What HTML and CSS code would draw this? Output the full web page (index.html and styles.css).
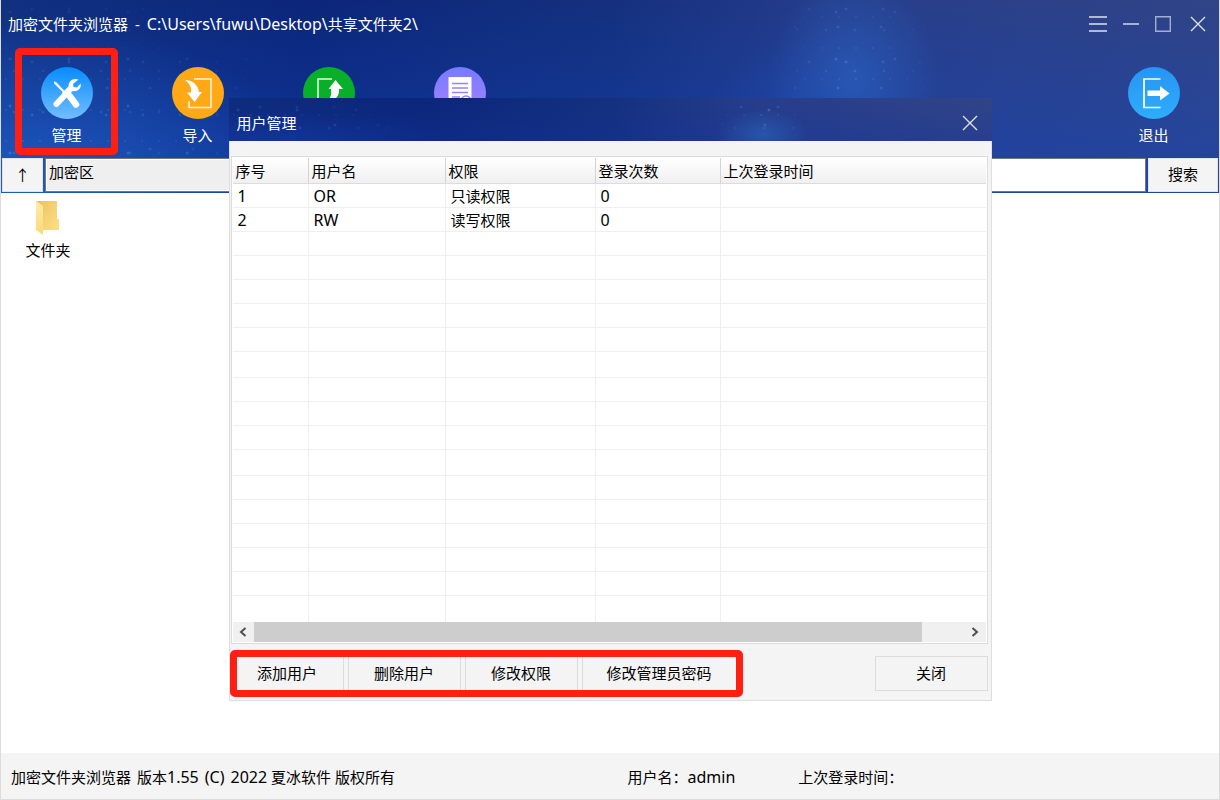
FILE: index.html
```html
<!DOCTYPE html>
<html lang="zh-CN">
<head>
<meta charset="utf-8">
<title>加密文件夹浏览器</title>
<link rel="stylesheet" href="styles.css">
</head>
<body>
<div class="app">
  <header class="banner night">
    <div class="titlebar">
      <h1 class="title"><span>加密文件夹浏览器</span><span>-</span><span><span class="latin">C:\Users\fuwu\Desktop\</span>共享文件夹<span class="latin">2\</span></span></h1>
      <div class="window-controls">
        <button class="win-btn" aria-label="菜单"><svg width="18" height="20" viewBox="0 0 18 20"><path d="M0 3h18M0 10h18M0 17h18"/></svg></button>
        <button class="win-btn" aria-label="最小化"><svg width="16" height="20" viewBox="0 0 16 20"><path d="M0 10h16"/></svg></button>
        <button class="win-btn" aria-label="最大化"><svg class="dim" width="16" height="20" viewBox="0 0 16 20"><path d="M.7 2.7h14.6v14.6H.7z"/></svg></button>
        <button class="win-btn win-close" aria-label="关闭窗口"><svg width="16" height="20" viewBox="0 0 16 20"><path d="M1 3l14 14M15 3L1 17"/></svg></button>
      </div>
    </div>
    <nav class="tools">
      <button class="tool tool-marked">
        <svg width="52" height="52" viewBox="0 0 52 52">
          <defs><linearGradient id="g1" x2="0" y2="1"><stop stop-color="#058cff"/><stop offset="1" stop-color="#73bdff"/></linearGradient></defs>
          <circle cx="26" cy="26" r="26" fill="url(#g1)"/>
          <path d="M13 14.500 L15 15 25 25.500 23.500 26.800 13 16.500Z" fill="#fff"/>
          <path d="M27.500 27.500 L35 37.500" stroke="#fff" stroke-width="6.500" stroke-linecap="round"/>
          <path d="M23.500 28.500 L15.500 37" stroke="#fff" stroke-width="6" stroke-linecap="round"/>
          <path d="M22 27 L30 19" stroke="#fff" stroke-width="3"/>
          <path d="M37.500 12.500 C32.500 10.500 26.500 14 27.800 20 L26 23.500 29 26 32 24 C37 25 41 20.500 39.500 16.500 L36 20.500 32.500 20 32 17Z" fill="#fff"/>
        </svg><span>管理</span>
      </button>
      <button class="tool">
        <svg width="52" height="52" viewBox="0 0 52 52">
          <circle cx="26" cy="26" r="26" fill="#ffa916"/>
          <path d="M22 12h17v28.500H17V34" fill="none" stroke="#fff3dc" stroke-width="1.600"/>
          <path d="M13 13 C21 13 26 18 27 25H30L22.500 35 15 25.500H19 C20 20 17 16 13 13Z" fill="#fff"/>
        </svg><span>导入</span>
      </button>
      <button class="tool">
        <svg width="52" height="52" viewBox="0 0 52 52">
          <circle cx="26" cy="26" r="26" fill="#08b02a"/>
          <path d="M29 12H15v28.500H36V34" fill="none" stroke="#e6f9e9" stroke-width="1.600"/>
          <path d="M23 36 C27 32 29 28 28 22H25.500L32.500 13 40 22H36 C37 29 31 35 23 36Z" fill="#fff"/>
        </svg><span>导出</span>
      </button>
      <button class="tool">
        <svg width="52" height="52" viewBox="0 0 52 52">
          <defs><linearGradient id="g2" x2="0" y2="1"><stop stop-color="#767aff"/><stop offset="1" stop-color="#a884ff"/></linearGradient></defs>
          <circle cx="26" cy="26" r="26" fill="url(#g2)"/>
          <path d="M14.500 10h23v30h-23z" fill="#fff"/>
          <path d="M18 16.500h16M18 21h16M18 25.500h16M18 30h8" stroke="#9681ff" stroke-width="1.300"/>
          <circle cx="32" cy="34" r="5" fill="#fff" stroke="#9681ff" stroke-width="1.500"/>
        </svg><span>日志</span>
      </button>
      <button class="tool tool-exit">
        <svg width="52" height="52" viewBox="0 0 52 52">
          <defs><linearGradient id="g3" x2="0" y2="1"><stop stop-color="#2794f3"/><stop offset="1" stop-color="#2fadfb"/></linearGradient></defs>
          <circle cx="26" cy="26" r="26" fill="url(#g3)"/>
          <path d="M32.500 12H16v28.500h16.500" fill="none" stroke="#fff" stroke-width="1.700"/>
          <path d="M19.500 23.500H32V19L41.500 26.500 32 33.500V29H19.500Z" fill="#fff"/>
        </svg><span>退出</span>
      </button>
    </nav>
    <form class="pathbar">
      <button type="button" class="up" aria-label="上一级">↑</button>
      <div class="fields">
        <input class="path" type="text" aria-label="当前路径" value="加密区" readonly>
        <input class="query" type="text" aria-label="搜索内容">
      </div>
      <button type="button" class="search">搜索</button>
    </form>
  </header>
  <main class="files">
    <a class="folder" href="#">
      <svg width="26" height="36" viewBox="0 0 26 36">
        <defs><linearGradient id="f1" x2="1" y2="1"><stop stop-color="#e9c35d"/><stop offset="1" stop-color="#ffdf86"/></linearGradient>
        <linearGradient id="f2" x2="0" y2="1"><stop stop-color="#ffebaa"/><stop offset="1" stop-color="#fbd976"/></linearGradient></defs>
        <path d="M1 1h21v17l2 2v10H8z" fill="url(#f1)"/>
        <path d="M1 1l7 5v29l-7-5z" fill="url(#f2)"/>
      </svg>
      <span>文件夹</span>
    </a>
  </main>
  <footer class="status">
    <p class="copyright"><span>加密文件夹浏览器</span><span>版本<span class="latin">1.55</span></span><span class="latin">(C)</span><span><span class="latin">2022</span> 夏冰软件 版权所有</span></p>
    <p class="user">用户名：<span class="latin">admin</span></p>
    <p class="last">上次登录时间：</p>
  </footer>

  <div class="overlay">
    <section class="dialog" role="dialog" aria-labelledby="dlg">
      <header class="dialog-head night">
        <h2 id="dlg">用户管理</h2>
        <button class="win-btn" aria-label="关闭对话框"><svg width="16" height="20" viewBox="0 0 16 20"><path d="M1 3l14 14M15 3L1 17"/></svg></button>
      </header>
      <div class="dialog-body">
        <div class="list">
          <table>
            <colgroup><col class="c1"><col class="c2"><col class="c3"><col class="c4"><col></colgroup>
            <thead><tr><th>序号</th><th>用户名</th><th>权限</th><th>登录次数</th><th>上次登录时间</th></tr></thead>
            <tbody>
              <tr><td class="latin">1</td><td class="latin">OR</td><td>只读权限</td><td class="latin">0</td><td></td></tr>
              <tr><td class="latin">2</td><td class="latin">RW</td><td>读写权限</td><td class="latin">0</td><td></td></tr>
              <tr><td></td><td></td><td></td><td></td><td></td></tr>
              <tr><td></td><td></td><td></td><td></td><td></td></tr>
              <tr><td></td><td></td><td></td><td></td><td></td></tr>
              <tr><td></td><td></td><td></td><td></td><td></td></tr>
              <tr><td></td><td></td><td></td><td></td><td></td></tr>
              <tr class="tall"><td></td><td></td><td></td><td></td><td></td></tr>
              <tr><td></td><td></td><td></td><td></td><td></td></tr>
              <tr><td></td><td></td><td></td><td></td><td></td></tr>
              <tr><td></td><td></td><td></td><td></td><td></td></tr>
              <tr class="tall"><td></td><td></td><td></td><td></td><td></td></tr>
              <tr><td></td><td></td><td></td><td></td><td></td></tr>
              <tr><td></td><td></td><td></td><td></td><td></td></tr>
              <tr><td></td><td></td><td></td><td></td><td></td></tr>
              <tr><td></td><td></td><td></td><td></td><td></td></tr>
              <tr><td></td><td></td><td></td><td></td><td></td></tr>
              <tr class="tall last-row"><td></td><td></td><td></td><td></td><td></td></tr>
            </tbody>
          </table>
          <div class="scrollbar">
            <button aria-label="向左滚动"><svg width="8" height="10" viewBox="0 0 8 10"><path d="M6.500 1L2 5l4.500 4"/></svg></button>
            <div class="track"><div class="thumb"></div></div>
            <button aria-label="向右滚动"><svg width="8" height="10" viewBox="0 0 8 10"><path d="M1.500 1L6 5l-4.500 4"/></svg></button>
          </div>
        </div>
        <div class="actions">
          <div class="marked">
            <button class="action">添加用户</button>
            <button class="action">删除用户</button>
            <button class="action">修改权限</button>
            <button class="action wide">修改管理员密码</button>
          </div>
          <button class="action">关闭</button>
        </div>
      </div>
    </section>
  </div>
</div>
</body>
</html>
```
FILE: styles.css
```css
* { box-sizing: border-box; }
body, h1, h2, p { margin: 0; }
body, button, input {
  font: 15px/20px "Noto Sans", "Noto Sans CJK SC", sans-serif;
  color: #000;
}
button { border: 0; padding: 0; background: none; }
h1, h2 { font-size: 15px; font-weight: 400; }
svg { display: block; }
.latin { font-size: 16px; }

.app {
  position: relative;
  display: flex;
  flex-direction: column;
  min-height: 100vh;
  background: #fff;
  border: 1px solid #dcdcdc;
  border-top: 0;
}

/* Night-sky banner shared by the window and the dialog */
.night {
  position: relative;
  isolation: isolate;
  color: #fff;
  background:
    radial-gradient(ellipse 7% 55% at 70% 40%, rgba(42, 96, 190, .7), transparent),
    radial-gradient(ellipse 9% 60% at 66% 80%, rgba(30, 80, 190, .5), transparent),
    radial-gradient(ellipse 24% 90% at 2% 100%, rgba(35, 105, 210, .7), transparent),
    linear-gradient(to bottom, rgba(10, 60, 190, 0), rgba(20, 70, 190, .5)),
    linear-gradient(to right, #11307f 0, #0b267a 25%, #14307e 50%, #263d8a 68%, #304486 100%);
}
.dialog-head.night {
  background:
    radial-gradient(ellipse 6% 60% at 70% 85%, rgba(42, 96, 180, .7), transparent),
    radial-gradient(ellipse 24% 70% at 5% 100%, rgba(20, 60, 170, .5), transparent),
    linear-gradient(to bottom, rgba(10, 40, 160, 0), rgba(20, 50, 160, .3)),
    linear-gradient(to right, #0e2c7c 0, #0b267a 25%, #14307e 50%, #263d8a 68%, #304486 100%);
}
.night::before {
  content: "";
  position: absolute;
  inset: 0;
  z-index: -1;
  background:
    radial-gradient(circle at 9px 12px, rgba(130, 185, 255, .5) 0, transparent 2px) 0 0 / 59px 47px,
    radial-gradient(circle at 20px 27px, rgba(130, 185, 255, .4) 0, transparent 2px) 0 0 / 43px 61px,
    radial-gradient(circle at 5px 17px, rgba(130, 185, 255, .5) 0, transparent 1px) 0 0 / 17px 31px,
    radial-gradient(circle at 31px 9px, rgba(130, 185, 255, .4) 0, transparent 2px) 0 0 / 37px 53px,
    radial-gradient(circle at 13px 30px, rgba(130, 185, 255, .3) 0, transparent 2px) 0 0 / 29px 41px;
  -webkit-mask-image: radial-gradient(ellipse 22% 100% at 4% 80%, #000, transparent), radial-gradient(ellipse 7% 80% at 70% 40%, #000, transparent);
  mask-image: radial-gradient(ellipse 22% 100% at 4% 80%, #000, transparent), radial-gradient(ellipse 7% 80% at 70% 40%, #000, transparent);
}

.titlebar {
  display: flex;
  justify-content: space-between;
  align-items: center;
  height: 48px;
  padding: 0 13px 0 7px;
}
.title { display: flex; align-items: baseline; gap: 7px; }
.window-controls { display: flex; gap: 16px; }
.win-close { margin-left: 3px; }
.win-btn svg { fill: none; stroke: #dde1ee; stroke-width: 1.4; }
.win-btn svg.dim { stroke: #a4aed0; }

.tools { display: flex; gap: 28px; padding: 0 14px 3px 14px; }
.tool {
  display: flex;
  flex-direction: column;
  align-items: center;
  gap: 6px;
  width: 103px;
  height: 107px;
  padding-top: 19px;
  color: #fff;
}
.tool-marked { outline: 7px solid #ff2013; outline-offset: -7px; border-radius: 5px; }
.tool-exit { margin-left: auto; }

.pathbar { display: flex; gap: 2px; padding: 0 1px 1px; }
.up, .search { height: 34px; background: #f4f4f4; border: 1px solid #e2e2e2; }
.up { width: 41px; }
.search { width: 70px; padding-bottom: 2px; }
.fields { flex: 1; display: flex; border: 1px solid #777; }
.fields input { flex: 1; min-width: 0; height: 32px; border: 1px solid #fff; outline: 0; }
.fields .path { padding: 0 2px 8px; background: #efefef; }

.files { flex: 1; padding: 7px 0 0 15px; }
.folder {
  display: inline-flex;
  flex-direction: column;
  align-items: center;
  gap: 4px;
  width: 64px;
  color: #000;
  text-decoration: none;
}

.status { display: grid; grid-template-columns: 617fr 171fr 411fr; height: 46px; padding: 14px 10px 0; background: #f4f4f4; }
.copyright { display: flex; align-items: baseline; gap: 6px; }

.overlay { position: absolute; inset: 0; display: grid; place-items: center; }
.dialog { width: 763px; max-width: 100%; background: #f4f4f4; }
.dialog-head { display: flex; justify-content: space-between; align-items: center; height: 43px; padding: 6px 14px 0 8px; }
.dialog-body { padding: 15px 3px 9px 1px; border: 1px solid #dedede; border-top: 0; }

.list { background: #fff; border: 1px solid #dcdcdc; padding: 1px; }
table { width: 100%; table-layout: fixed; border-collapse: separate; border-spacing: 0; }
.c1 { width: 76px; }
.c2 { width: 137px; }
.c3 { width: 150px; }
.c4 { width: 125px; }
th {
  height: 26px;
  padding: 0 3px;
  font-weight: 400;
  text-align: left;
  background: linear-gradient(#fff, #f0f0f0);
  border-right: 1px solid #d4d4d4;
  border-bottom: 1px solid #dcdcdc;
}
td { height: 24px; padding: 0 5px; border-right: 1px solid #efefef; border-bottom: 1px solid #efefef; }
th:last-child, td:last-child { border-right: 0; }
.tall td { height: 26px; }
.last-row td { border-bottom: 0; }

.scrollbar { display: flex; height: 20px; background: #f0f0f0; }
.scrollbar button { display: grid; place-items: center; width: 21px; }
.scrollbar svg { fill: none; stroke: #505050; stroke-width: 2; }
.track { flex: 1; }
.thumb { width: 94%; height: 100%; background: #cdcdcd; }

.actions { display: flex; justify-content: space-between; padding-top: 12px; }
.marked { position: relative; display: flex; gap: 4px; }
.marked::after { content: ""; position: absolute; inset: -6px -6px -6px -1px; border: 7px solid #ff2013; border-radius: 5px; pointer-events: none; }
.action { width: 113px; height: 35px; padding-bottom: 2px; border: 1px solid #dcdcdc; }
.action.wide { width: 155px; }
```
